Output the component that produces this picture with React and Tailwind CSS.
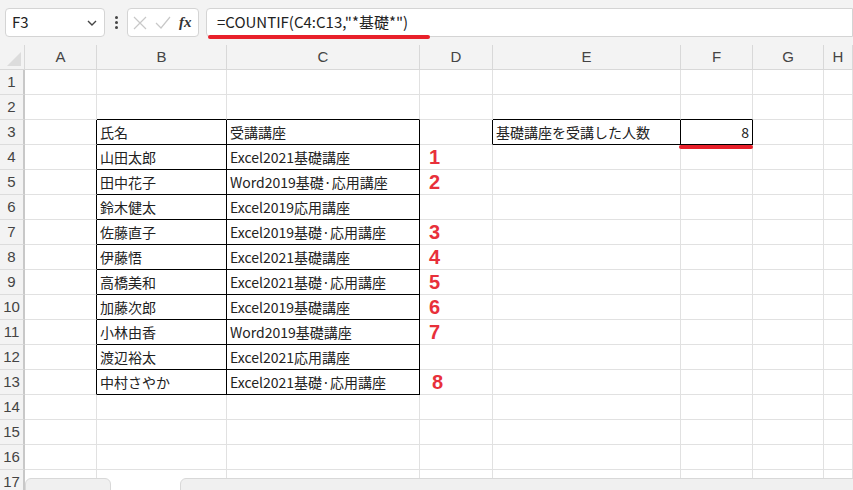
import React from "react";

const cols = ["A","B","C","D","E","F","G","H"];
const data = {
  3: ["氏名","受講講座"],4:["山田太郎","Excel2021基礎講座"],5:["田中花子","Word2019基礎·応用講座"],
  6:["鈴木健太","Excel2019応用講座"],7:["佐藤直子","Excel2019基礎·応用講座"],8:["伊藤悟","Excel2021基礎講座"],
  9:["高橋美和","Excel2021基礎·応用講座"],10:["加藤次郎","Excel2019基礎講座"],11:["小林由香","Word2019基礎講座"],
  12:["渡辺裕太","Excel2021応用講座"],13:["中村さやか","Excel2021基礎·応用講座"],
};
const marks = {4:"1",5:"2",7:"3",8:"4",9:"5",10:"6",11:"7",13:"8"};

function cellCls(c, r) {
  const inT = r >= 3 && r <= 13;
  const rb = (inT && (c==="A"||c==="B"||c==="C")) || (r===3 && (c==="D"||c==="E"||c==="F"));
  const bb = ((c==="B"||c==="C") && r>=2 && r<=13) || ((c==="E"||c==="F") && r>=2 && r<=3);
  return (rb ? "border-r-black " : "border-r-[#e1e1e1] ") + (bb ? "border-b-black" : "border-b-[#e1e1e1]");
}

export default function App() {
  const rows = Array.from({length:17},(_,i)=>i+1);
  return (
    <div className="w-[853px] h-[490px] overflow-hidden bg-white text-[#222]" style={{fontFamily:'"Noto Sans CJK JP","Noto Sans",sans-serif'}}>
      <div className="h-[45px] bg-[#f3f3f3] flex items-center pl-[5px] gap-0 relative">
        <div className="w-[100px] h-[29px] bg-white border border-[#d4d4d4] rounded flex items-center justify-between px-[6px] text-[15px]">
          <span>F3</span>
          <svg width="12" height="12" viewBox="0 0 12 12"><path d="M2 4l4 4 4-4" fill="none" stroke="#444" strokeWidth="1.4"/></svg>
        </div>
        <div className="w-[22px] flex flex-col items-center gap-[2px]">
          <span className="w-[3px] h-[3px] rounded-full bg-[#444]"></span>
          <span className="w-[3px] h-[3px] rounded-full bg-[#444]"></span>
          <span className="w-[3px] h-[3px] rounded-full bg-[#444]"></span>
        </div>
        <div className="w-[72px] h-[29px] bg-white border border-[#d4d4d4] rounded flex items-center px-[5px] gap-[8px]">
          <svg width="14" height="14" viewBox="0 0 14 14"><path d="M1 1l12 12M13 1L1 13" stroke="#c8c8c8" strokeWidth="1.2"/></svg>
          <svg width="16" height="14" viewBox="0 0 16 14"><path d="M1 7l5 5L15 1" fill="none" stroke="#c8c8c8" strokeWidth="1.2"/></svg>
          <span className="italic font-bold text-[15px] text-[#333]" style={{fontFamily:'"Liberation Serif",serif'}}>fx</span>
        </div>
        <div className="ml-[7px] flex-1 h-[29px] bg-white border border-[#d4d4d4] rounded-l flex items-center pl-[10px] text-[15px] relative">
          =COUNTIF(C4:C13,"*基礎*")
          <div className="absolute left-[1px] top-[26px] w-[222px] h-[4px] rounded bg-[#e8202a]"></div>
        </div>
      </div>
      <div className="grid grid-cols-[25px_72px_130px_193px_73px_188px_72px_71px_1fr] text-[14px] relative">
        <div className="h-[25px] bg-[#f3f3f3] border-r border-b border-[#d8d8d8] relative">
          <div className="absolute right-[3px] bottom-[3px] w-0 h-0 border-l-[14px] border-l-transparent border-b-[14px] border-b-[#dcdcdc]"></div>
        </div>
        {cols.map(c=>(
          <div key={c} className="h-[25px] bg-[#f3f3f3] border-r border-b border-[#d8d8d8] flex items-center justify-center text-[#444] text-[15px]" style={{fontFamily:'"Liberation Sans",sans-serif'}}>{c}</div>
        ))}
        {rows.map(r=>(
          <React.Fragment key={r}>
            <div className="h-[25px] bg-[#f3f3f3] border-r-2 border-b border-r-[#c8c8c8] border-b-[#dcdcdc] flex items-center justify-center text-[#444] text-[15px]" style={{fontFamily:'"Liberation Sans",sans-serif'}}>{r}</div>
            {cols.map(c=>{
              let content=null, extra="";
              if (data[r] && c==="B") content=data[r][0];
              if (data[r] && c==="C") content=data[r][1];
              if (r===3 && c==="E") content="基礎講座を受講した人数";
              if (r===3 && c==="F") {content="8"; extra="justify-end pr-[3px]";}
              if (c==="D" && marks[r]) {content=<span className={"text-[#e8303a] font-bold text-[20px] "+(r===13?"ml-[9px]":"ml-[6px]")} style={{fontFamily:'"Liberation Sans",sans-serif'}}>{marks[r]}</span>;}
              return (
                <div key={c} className={"h-[25px] border-r border-b flex items-center px-[3px] whitespace-nowrap overflow-visible relative "+cellCls(c,r)+" "+extra}>
                  {content}
                  {r===3 && c==="F" && <div className="absolute left-[-2px] top-[25px] w-[74px] h-[4px] rounded bg-[#e8202a] z-10"></div>}
                </div>
              );
            })}
          </React.Fragment>
        ))}
        <div className="absolute left-[25px] top-[433px] w-[86px] h-[14px] bg-[#f0f0f0] border border-[#d8d8d8] rounded-t-md"></div>
        <div className="absolute left-[180px] top-[433px] w-[700px] h-[14px] bg-[#f0f0f0] border border-[#d8d8d8] rounded-t-md"></div>
      </div>
    </div>
  );
}
